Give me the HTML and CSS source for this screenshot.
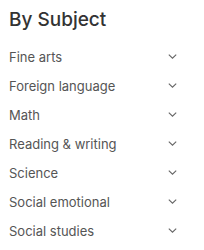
FILE: index.html
```html
<!DOCTYPE html>
<html>
<head>
<meta charset="utf-8">
<link rel="stylesheet" href="styles.css">
</head>
<body>
<div class="panel">
  <h2 class="title">By Subject</h2>
  <ul class="list">
    <li class="item"><span>Fine arts</span><svg class="chev" width="9" height="5" viewBox="0 0 9 5"><path d="M0.8 0.6 L4.5 4.2 L8.2 0.6" fill="none" stroke="#666" stroke-width="1.1"/></svg></li>
    <li class="item"><span>Foreign language</span><svg class="chev" width="9" height="5" viewBox="0 0 9 5"><path d="M0.8 0.6 L4.5 4.2 L8.2 0.6" fill="none" stroke="#666" stroke-width="1.1"/></svg></li>
    <li class="item"><span>Math</span><svg class="chev" width="9" height="5" viewBox="0 0 9 5"><path d="M0.8 0.6 L4.5 4.2 L8.2 0.6" fill="none" stroke="#666" stroke-width="1.1"/></svg></li>
    <li class="item"><span>Reading &amp; writing</span><svg class="chev" width="9" height="5" viewBox="0 0 9 5"><path d="M0.8 0.6 L4.5 4.2 L8.2 0.6" fill="none" stroke="#666" stroke-width="1.1"/></svg></li>
    <li class="item"><span>Science</span><svg class="chev" width="9" height="5" viewBox="0 0 9 5"><path d="M0.8 0.6 L4.5 4.2 L8.2 0.6" fill="none" stroke="#666" stroke-width="1.1"/></svg></li>
    <li class="item"><span>Social emotional</span><svg class="chev" width="9" height="5" viewBox="0 0 9 5"><path d="M0.8 0.6 L4.5 4.2 L8.2 0.6" fill="none" stroke="#666" stroke-width="1.1"/></svg></li>
    <li class="item"><span>Social studies</span><svg class="chev" width="9" height="5" viewBox="0 0 9 5"><path d="M0.8 0.6 L4.5 4.2 L8.2 0.6" fill="none" stroke="#666" stroke-width="1.1"/></svg></li>
  </ul>
</div>
</body>
</html>
```
FILE: styles.css
```css
html, body { margin: 0; padding: 0; background: #fff; }
body { font-family: Inter, "Noto Sans", sans-serif; }
.panel { padding: 7px 27px 0 9px; }
.title { margin: 0; font-size: 19px; font-weight: 500; color: #333; line-height: 26px; }
.list { list-style: none; margin: 9px 0 0 0; padding: 0; }
.item { display: flex; justify-content: space-between; align-items: center; height: 29px; font-size: 13px; color: #555; }
.chev { display: block; }
```
